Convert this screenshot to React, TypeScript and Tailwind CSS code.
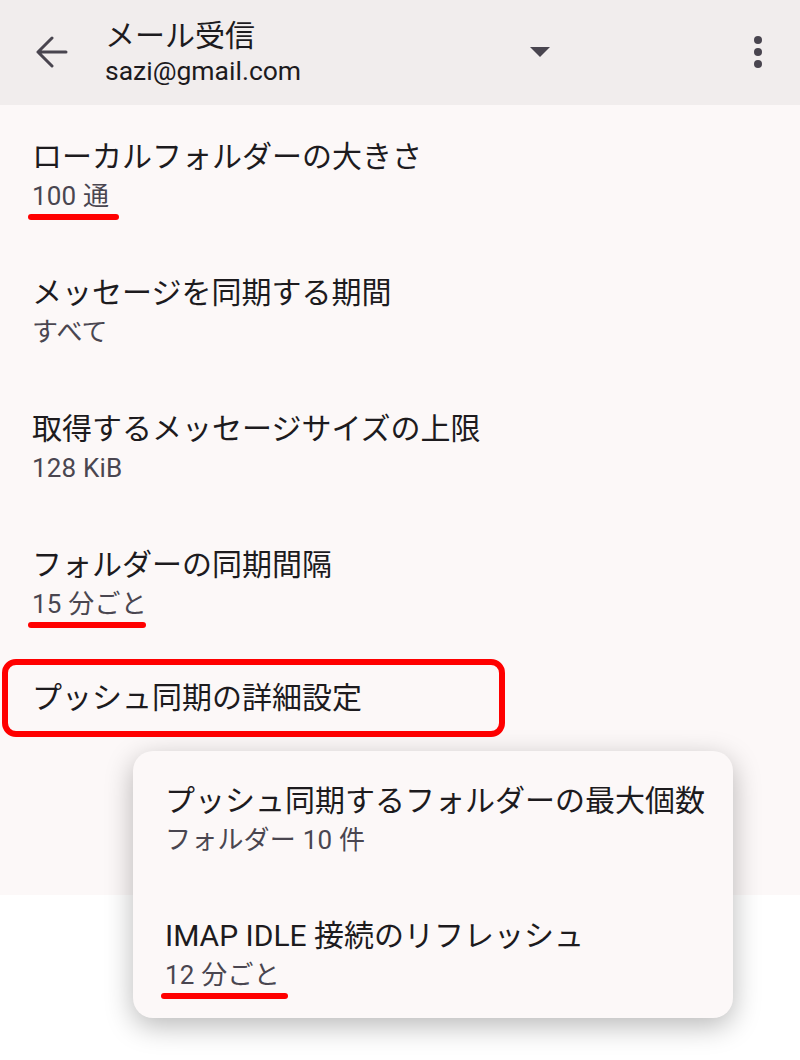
type Pref = { title: string; summary?: string; mark?: number };

const prefs: Pref[] = [
  { title: "ローカルフォルダーの大きさ", summary: "100 通", mark: 91 },
  { title: "メッセージを同期する期間", summary: "すべて" },
  { title: "取得するメッセージサイズの上限", summary: "128 KiB" },
  { title: "フォルダーの同期間隔", summary: "15 分ごと", mark: 118 },
];

const popupPrefs: Pref[] = [
  { title: "プッシュ同期するフォルダーの最大個数", summary: "フォルダー 10 件" },
  { title: "IMAP IDLE 接続のリフレッシュ", summary: "12 分ごと", mark: 127 },
];

const font = "font-['Roboto','Noto_Sans_CJK_JP',sans-serif]";

const Summary = ({ text, mark }: { text: string; mark?: number }) => (
  <div className="relative mt-[3px] text-[26px] leading-[34px] text-[#4a4650] tracking-[0.2px]">
    {text}
    {mark ? (
      <span
        className="absolute left-[-4px] top-[35px] h-[6px] rounded-full bg-[#ff0000]"
        style={{ width: mark }}
      />
    ) : null}
  </div>
);

const PrefRow = ({ pref }: { pref: Pref }) => (
  <div className="px-8 pt-[33px] h-[136px]">
    <div className="text-[30px] leading-[38px] text-[#1d1b1e]">{pref.title}</div>
    {pref.summary && <Summary text={pref.summary} mark={pref.mark} />}
  </div>
);

export default function App() {
  return (
    <div className={`relative w-[800px] h-[1060px] bg-white overflow-hidden ${font}`}>
      <header className="flex items-center h-[105px] bg-[#f1eded] pl-[36px] pr-[38px]">
        <svg width="32" height="32" viewBox="0 0 32 32" fill="none" stroke="#49454f" strokeWidth="3" strokeLinecap="round" strokeLinejoin="round" className="-mt-[2px]">
          <path d="M30 16H2M16 2 2 16l14 14" />
        </svg>
        <div className="ml-[37px] flex-1 -mt-[1px]">
          <div className="text-[30px] leading-[38px] text-[#1d1b1e]">メール受信</div>
          <div className="text-[26.5px] leading-[32px] text-[#1d1b1e]">sazi@gmail.com</div>
        </div>
        <svg width="20" height="10" viewBox="0 0 20 10" className="mr-[204px] -mt-[2px]">
          <path d="M0 0 L20 0 L10 10 Z" fill="#49454f" />
        </svg>
        <div className="flex flex-col gap-[4px] -mt-[2px]">
          <span className="size-[8px] rounded-full bg-[#49454f]" />
          <span className="size-[8px] rounded-full bg-[#49454f]" />
          <span className="size-[8px] rounded-full bg-[#49454f]" />
        </div>
      </header>

      <main className="bg-[#fcf8f8] h-[790px]">
        {prefs.map((p) => (
          <PrefRow key={p.title} pref={p} />
        ))}
        <div className="pl-[2px] pt-[10px]">
          <div className="w-[503px] h-[78px] border-[6px] border-[#ff0000] rounded-[14px] flex items-center pl-[24px]">
            <span className="text-[30px] leading-[38px] text-[#1d1b1e]">プッシュ同期の詳細設定</span>
          </div>
        </div>
      </main>

      <div className="absolute left-[133px] top-[751px] w-[600px] h-[267px] rounded-[20px] bg-[#fcf8f8] shadow-[0_8px_28px_rgba(0,0,0,0.28)] pl-8 pr-3 pt-[31px]">
        {popupPrefs.map((p, i) => (
          <div key={p.title} className={i === 0 ? "h-[135px]" : ""}>
            <div className="text-[30px] leading-[38px] text-[#1d1b1e] whitespace-nowrap">{p.title}</div>
            <Summary text={p.summary ?? ""} mark={p.mark} />
          </div>
        ))}
      </div>
    </div>
  );
}
